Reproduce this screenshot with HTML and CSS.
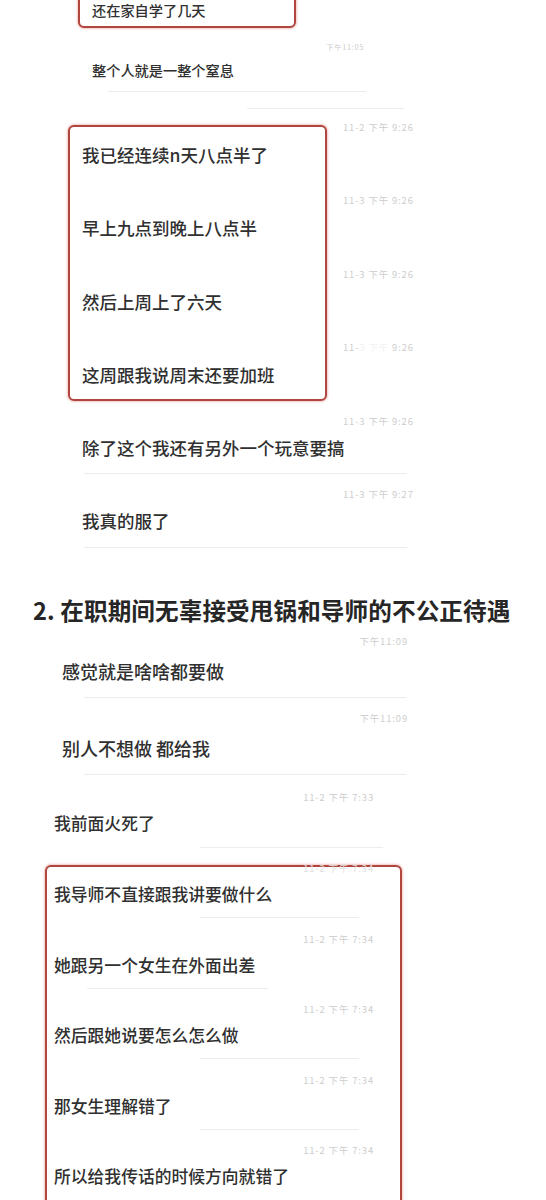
FILE: index.html
```html
<!DOCTYPE html>
<html lang="zh-CN">
<head>
<meta charset="utf-8">
<title>聊天记录</title>
<link rel="stylesheet" href="styles.css">
</head>
<body>
<main class="page">
  <section class="intro">
    <div class="box box-top"><p class="txt txt-sm">还在家自学了几天</p></div>
    <div class="intro-line">
      <div class="ts ts-sm">下午11:05</div>
      <p class="txt txt-sm">整个人就是一整个窒息</p>
    </div>
    <div class="rule rule-i1"></div>
    <div class="rule rule-i2"></div>
  </section>

  <section class="thread">
    <div class="thread-main">
      <div class="box box-mid">
        <p class="txt">我已经连续n天八点半了</p>
        <p class="txt">早上九点到晚上八点半</p>
        <p class="txt">然后上周上了六天</p>
        <p class="txt">这周跟我说周末还要加班</p>
      </div>
      <p class="txt txt-after">除了这个我还有另外一个玩意要搞</p>
      <div class="rule rule-t"></div>
      <p class="txt txt-after">我真的服了</p>
      <div class="rule rule-t rule-end"></div>
    </div>
    <div class="thread-times">
      <span class="ts">11-2 下午 9:26</span>
      <span class="ts">11-3 下午 9:26</span>
      <span class="ts">11-3 下午 9:26</span>
      <span class="ts">11-<span class="ts-hidden">3 下午</span> 9:26</span>
      <span class="ts">11-3 下午 9:26</span>
      <span class="ts">11-3 下午 9:27</span>
    </div>
  </section>

  <h2 class="heading">2. 在职期间无辜接受甩锅和导师的不公正待遇</h2>

  <section class="chat">
    <div class="msg msg-wide">
      <div class="ts">下午11:09</div>
      <p class="txt">感觉就是啥啥都要做</p>
      <div class="rule rule-a"></div>
    </div>
    <div class="msg msg-wide msg-b">
      <div class="ts">下午11:09</div>
      <p class="txt">别人不想做 都给我</p>
      <div class="rule rule-a"></div>
    </div>
    <div class="msg msg-c">
      <div class="ts">11-2 下午 7:33</div>
      <p class="txt">我前面火死了</p>
      <div class="rule rule-b"></div>
    </div>

    <div class="box box-bottom">
      <div class="msg msg-first">
        <div class="ts ts-faded">11-2 下午 7:34</div>
        <p class="txt">我导师不直接跟我讲要做什么</p>
        <div class="rule rule-c"></div>
      </div>
      <div class="msg">
        <div class="ts">11-2 下午 7:34</div>
        <p class="txt">她跟另一个女生在外面出差</p>
        <div class="rule rule-d"></div>
      </div>
      <div class="msg">
        <div class="ts">11-2 下午 7:34</div>
        <p class="txt">然后跟她说要怎么怎么做</p>
        <div class="rule rule-c"></div>
      </div>
      <div class="msg">
        <div class="ts">11-2 下午 7:34</div>
        <p class="txt">那女生理解错了</p>
        <div class="rule rule-c"></div>
      </div>
      <div class="msg">
        <div class="ts">11-2 下午 7:34</div>
        <p class="txt">所以给我传话的时候方向就错了</p>
      </div>
    </div>
  </section>
</main>
</body>
</html>
```

FILE: styles.css
```css
* {
  box-sizing: border-box;
}

html, body {
  margin: 0;
  padding: 0;
  background: #ffffff;
}

body {
  font-family: "Noto Sans CJK SC", "Noto Sans", sans-serif;
  color: #303030;
}

p, h2 {
  margin: 0;
}

.page {
  width: 546px;
  overflow: hidden;
}

/* generic pieces */
.txt {
  font-size: 17.5px;
  line-height: 20px;
  font-weight: 500;
  color: #303030;
  white-space: nowrap;
}

.ts {
  display: block;
  font-size: 9.4px;
  line-height: 10px;
  letter-spacing: 0.9px;
  color: #cdcdcd;
  white-space: nowrap;
}

.ts-hidden {
  color: #f1f1f1;
}

.ts-faded {
  color: #e0e0e0;
}

.rule {
  height: 1px;
  background: #ededed;
}

.box {
  border: 2px solid #b0463f;
  border-radius: 6px;
  box-shadow: 0 0 2px 1px rgba(220, 130, 120, 0.45);
  background: #ffffff;
}

/* intro (cut-off top) */
.box-top {
  margin: -14px 0 0 78px;
  width: 218px;
  padding: 12px 0 6px 12px;
}

.txt-sm {
  font-size: 14.2px;
  line-height: 20px;
}

.intro-line {
  margin-left: 92px;
  width: 272px;
}

.ts-sm {
  font-size: 7.3px;
  letter-spacing: 0.7px;
  text-align: right;
  margin-top: 14px;
}

.intro-line .txt-sm {
  margin-top: 8px;
}

.rule-i1 {
  margin: 11px 0 0 108px;
  width: 258px;
}

.rule-i2 {
  margin: 16px 0 0 247px;
  width: 157px;
}

/* first thread */
.thread {
  display: flex;
  align-items: flex-start;
  column-gap: 16px;
  padding-left: 68px;
  margin-top: 13px;
}

.thread-main {
  width: 259px;
  flex: none;
}

.box-mid {
  margin-top: 3px;
  padding: 18px 0 14px 12px;
}

.box-mid .txt + .txt {
  margin-top: 53.4px;
}

.txt-after {
  margin: 37px 0 0 14px;
}

.rule-t {
  margin: 15px 0 0 16px;
  width: 323px;
}

.rule-end {
  margin-top: 16px;
}

.thread-times {
  display: flex;
  flex-direction: column;
  row-gap: 63.4px;
  width: 90px;
}

/* heading */
.heading {
  margin-top: 47px;
  padding-left: 33px;
  font-size: 23.6px;
  line-height: 30px;
  font-weight: 700;
  color: #262626;
  letter-spacing: 0.1px;
  white-space: nowrap;
}

/* second chat */
.chat {
  margin-top: 11px;
}

.msg .ts {
  text-align: right;
}

.msg .txt {
  margin-top: 10px;
  font-size: 16.8px;
  line-height: 22px;
}

.msg-wide {
  width: 408px;
  padding-left: 62px;
}

.msg-wide .txt {
  margin-top: 14px;
  font-size: 18px;
}

.msg-b {
  margin-top: 15px;
}

.msg-c {
  width: 374px;
  padding-left: 54px;
  margin-top: 17px;
}

.rule-a {
  margin: 15px 0 0 22px;
  width: 322px;
}

.rule-b {
  margin: 13px 0 0 146px;
  width: 183px;
}

.box-bottom {
  margin: 17px 0 0 45px;
  width: 357px;
  padding: 0 26px 40px 7px;
}

.msg-first .ts {
  margin-top: -4px;
}

.box-bottom .msg + .msg {
  margin-top: 15.5px;
}

.rule-c {
  margin: 12px 0 0 146px;
  width: 159px;
}

.rule-d {
  margin: 12px 0 0 33px;
  width: 181px;
}
```
